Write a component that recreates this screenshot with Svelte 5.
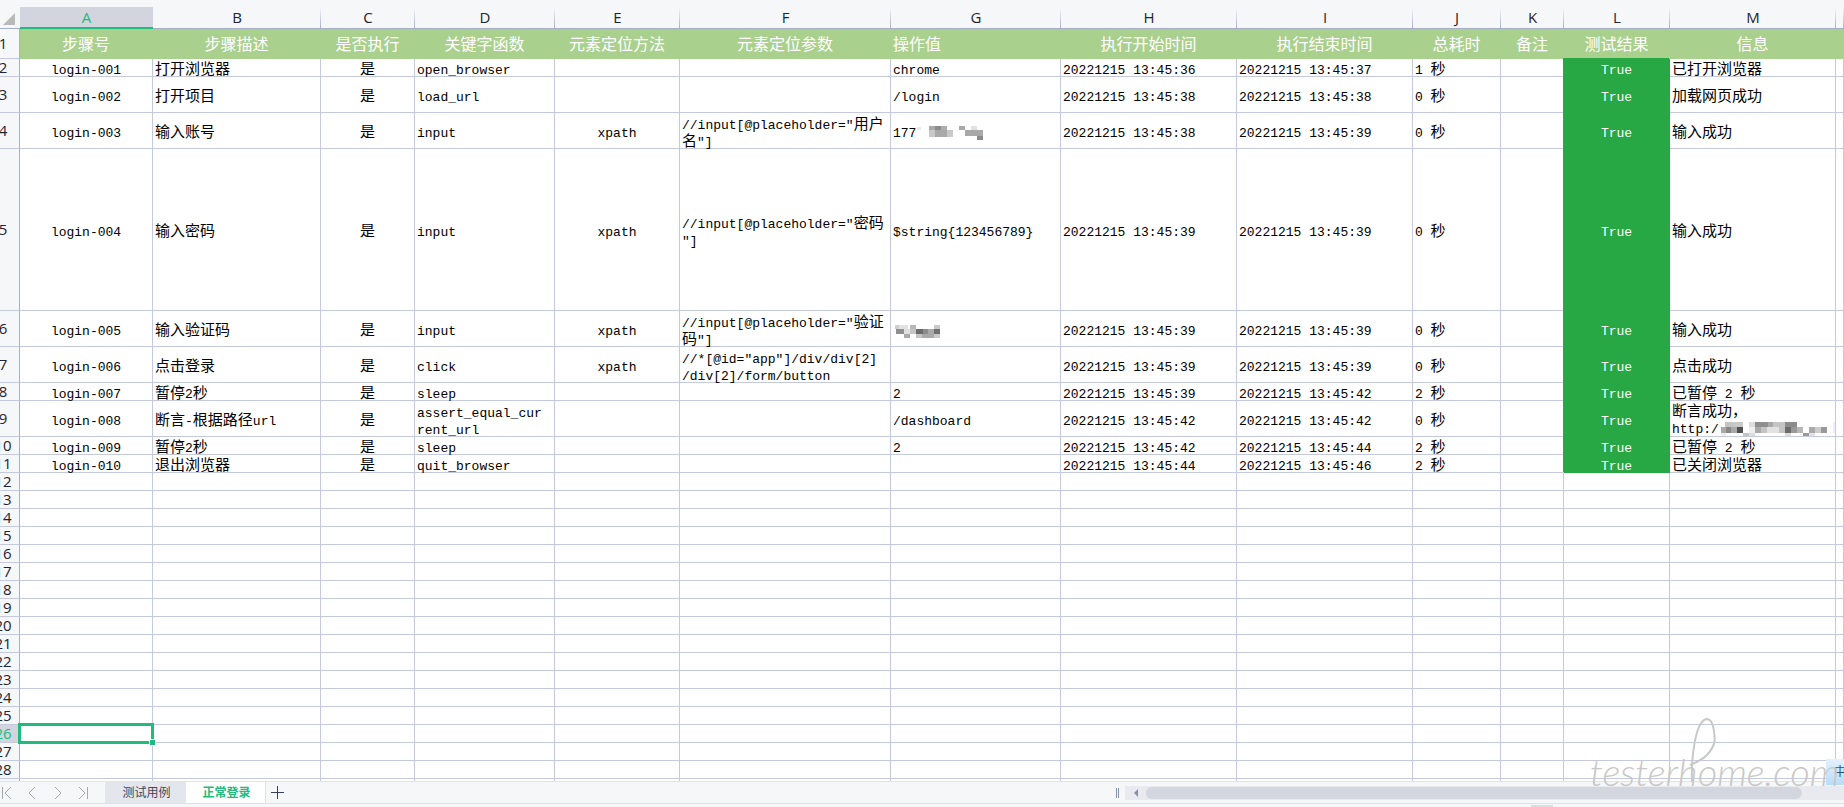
<script>
  const COLUMNS = [
    { id: 'A', width: 133, title: '步骤号', center: true },
    { id: 'B', width: 168, title: '步骤描述' },
    { id: 'C', width: 94, title: '是否执行', center: true },
    { id: 'D', width: 140, title: '关键字函数' },
    { id: 'E', width: 125, title: '元素定位方法', center: true },
    { id: 'F', width: 211, title: '元素定位参数' },
    { id: 'G', width: 170, title: '操作值', titleLeft: true },
    { id: 'H', width: 176, title: '执行开始时间' },
    { id: 'I', width: 176, title: '执行结束时间' },
    { id: 'J', width: 88, title: '总耗时' },
    { id: 'K', width: 63, title: '备注' },
    { id: 'L', width: 106, title: '测试结果', center: true },
    { id: 'M', width: 166, title: '信息' },
  ];

  const STEPS = [
    { height: 18, cells: ['login-001', '打开浏览器', '是', 'open_browser', '', '', 'chrome', '20221215 13:45:36', '20221215 13:45:37', '1 秒', '', 'True', '已打开浏览器'] },
    { height: 36, cells: ['login-002', '打开项目', '是', 'load_url', '', '', '/login', '20221215 13:45:38', '20221215 13:45:38', '0 秒', '', 'True', '加载网页成功'] },
    { height: 36, cells: ['login-003', '输入账号', '是', 'input', 'xpath', '//input[@placeholder="用户\n名"]', '177', '20221215 13:45:38', '20221215 13:45:39', '0 秒', '', 'True', '输入成功'] },
    { height: 162, cells: ['login-004', '输入密码', '是', 'input', 'xpath', '//input[@placeholder="密码\n"]', '$string{123456789}', '20221215 13:45:39', '20221215 13:45:39', '0 秒', '', 'True', '输入成功'] },
    { height: 36, cells: ['login-005', '输入验证码', '是', 'input', 'xpath', '//input[@placeholder="验证\n码"]', '', '20221215 13:45:39', '20221215 13:45:39', '0 秒', '', 'True', '输入成功'] },
    { height: 36, cells: ['login-006', '点击登录', '是', 'click', 'xpath', '//*[@id="app"]/div/div[2]\n/div[2]/form/button', '', '20221215 13:45:39', '20221215 13:45:39', '0 秒', '', 'True', '点击成功'] },
    { height: 18, cells: ['login-007', '暂停2秒', '是', 'sleep', '', '', '2', '20221215 13:45:39', '20221215 13:45:42', '2 秒', '', 'True', '已暂停 2 秒'] },
    { height: 36, cells: ['login-008', '断言-根据路径url', '是', 'assert_equal_cur\nrent_url', '', '', '/dashboard', '20221215 13:45:42', '20221215 13:45:42', '0 秒', '', 'True', '断言成功，\nhttp:/'] },
    { height: 18, cells: ['login-009', '暂停2秒', '是', 'sleep', '', '', '2', '20221215 13:45:42', '20221215 13:45:44', '2 秒', '', 'True', '已暂停 2 秒'] },
    { height: 18, cells: ['login-010', '退出浏览器', '是', 'quit_browser', '', '', '', '20221215 13:45:44', '20221215 13:45:46', '2 秒', '', 'True', '已关闭浏览器'] },
  ];

  // Pixelated blocks over private values: [x, y, w, h, fill], keyed by cell
  const MASKS = {
    G4: { width: 68, height: 14, tiles: [
      [1, 1, 4, 3, '#e9e9e9'], [13, 0, 6, 4, '#a9a9a9'], [19, 0, 6, 4, '#8b8b8b'], [25, 0, 6, 4, '#adadad'],
      [13, 4, 6, 7, '#c8c8c8'], [19, 4, 12, 7, '#a9a9a9'], [31, 4, 6, 7, '#c9c9c9'],
      [43, 0, 6, 4, '#a9a9a9'], [55, 0, 6, 4, '#e2e2e2'], [49, 4, 18, 6, '#a9a9a9'], [61, 10, 6, 4, '#8b8b8b'],
    ] },
    G6: { width: 48, height: 13, tiles: [
      [2, 0, 4, 4, '#d0d0d0'], [6, 0, 9, 4, '#e2e2e2'], [17, 0, 6, 4, '#b8b8b8'], [41, 0, 6, 4, '#c9c9c9'],
      [3, 4, 8, 5, '#8f8f8f'], [11, 4, 6, 5, '#e0e0e0'], [17, 4, 6, 5, '#c5c5c5'], [23, 4, 7, 5, '#6b6b6b'],
      [30, 4, 5, 5, '#8b8b8b'], [35, 4, 6, 5, '#a9a9a9'], [41, 4, 6, 5, '#6f6f6f'],
      [11, 9, 6, 4, '#a9a9a9'], [23, 9, 6, 4, '#c5c5c5'], [29, 9, 12, 4, '#a9a9a9'], [41, 9, 6, 4, '#c9c9c9'],
    ] },
    M9: { width: 116, height: 14, tiles: [
      [6, 0, 8, 5, '#c4c4c4'], [14, 0, 10, 5, '#c9c9c9'], [30, 0, 6, 5, '#ddd'], [36, 0, 13, 5, '#8f8f8f'],
      [49, 0, 5, 5, '#a9a9a9'], [54, 0, 12, 5, '#c4c4c4'], [66, 0, 12, 5, '#8b8b8b'],
      [2, 5, 5, 6, '#a9a9a9'], [7, 5, 5, 6, '#888'], [12, 5, 6, 6, '#a9a9a9'], [18, 5, 6, 6, '#4f4f4f'],
      [30, 5, 6, 6, '#eee'], [36, 5, 6, 6, '#a9a9a9'], [42, 5, 6, 6, '#c4c4c4'], [48, 5, 12, 6, '#e2e2e2'],
      [60, 5, 6, 6, '#c4c4c4'], [66, 5, 6, 6, '#6b6b6b'], [72, 5, 6, 6, '#999'], [78, 5, 6, 6, '#b8b8b8'],
      [90, 5, 6, 6, '#a9a9a9'], [96, 5, 6, 6, '#ccc'], [102, 5, 6, 6, '#999'], [2, 11, 5, 3, '#eee'],
      [24, 11, 6, 3, '#c4c4c4'], [30, 11, 6, 3, '#ddd'], [66, 11, 6, 3, '#ddd'], [84, 11, 6, 3, '#999'],
      [90, 11, 6, 3, '#e2e2e2'], [114, 0, 2, 11, '#eef'],
    ] },
  };

  const TABS = ['测试用例', '正常登录'];

  let activeTab = $state('正常登录');
  let selected = $state({ col: 'A', row: 26 });

  const emptyRows = Array.from({ length: 18 }, (_, i) => i + 12);

  // Latin runs use a narrower face than the Chinese ones
  function runs(text) {
    return text.match(/[\u3000-\u9fff\uff0c]+|[^\u3000-\u9fff\uff0c]+/g) || [];
  }

  function isLatin(run) {
    return run.charCodeAt(0) < 0x3000;
  }

  function isSelected(col, row) {
    return selected.col === col && selected.row === row;
  }
</script>

<div class="workbook">
  <div class="sheet">
    <table>
      <colgroup>
        <col class="col-index" />
        {#each COLUMNS as col}
          <col style="width: {col.width}px" />
        {/each}
        <col />
      </colgroup>
      <thead>
        <tr class="letters">
          <th class="corner"><svg width="12" height="12" viewBox="0 0 12 12"><path d="M12 0V12H0Z" fill="#b9b9b9" /></svg></th>
          {#each COLUMNS as col}
            <th scope="col" class:current={selected.col === col.id}><span>{col.id}</span></th>
          {/each}
          <th><span></span></th>
        </tr>
      </thead>
      <tbody>
        <tr class="titles">
          <th scope="row" class="index">1</th>
          {#each COLUMNS as col}
            <td class:left={col.titleLeft}>{col.title}</td>
          {/each}
          <td></td>
        </tr>
        {#each STEPS as step, i}
          <tr style="height: {step.height}px">
            <th scope="row" class="index">{i + 2}</th>
            {#each COLUMNS as col, c}
              {@const mask = MASKS[col.id + (i + 2)]}
              <td class:center={col.center} class:pass={col.id === 'L'} onclick={() => (selected = { col: col.id, row: i + 2 })} class:selected={isSelected(col.id, i + 2)}>{#each runs(step.cells[c]) as run}<span class:latin={isLatin(run)}>{run}</span>{/each}{#if mask}<svg class="mask" width={mask.width} height={mask.height}>{#each mask.tiles as [x, y, w, h, fill]}<rect {x} {y} width={w} height={h} {fill} />{/each}</svg>{/if}</td>
            {/each}
            <td></td>
          </tr>
        {/each}
        {#each emptyRows as row}
          <tr class="blank">
            <th scope="row" class="index" class:current={selected.row === row}>{row}</th>
            {#each COLUMNS as col}
              <td class:selected={isSelected(col.id, row)} onclick={() => (selected = { col: col.id, row })}></td>
            {/each}
            <td></td>
          </tr>
        {/each}
      </tbody>
    </table>
  </div>

  <div class="bottom-bar">
    <div class="tab-area">
      <div class="nav">
        <button aria-label="第一个工作表"><svg width="12" height="14" viewBox="0 0 12 14"><path d="M2.5 1V13M11 1L5 7L11 13" /></svg></button>
        <button aria-label="上一个工作表"><svg width="12" height="14" viewBox="0 0 12 14"><path d="M9 1L3 7L9 13" /></svg></button>
        <button aria-label="下一个工作表"><svg width="12" height="14" viewBox="0 0 12 14"><path d="M3 1L9 7L3 13" /></svg></button>
        <button aria-label="最后一个工作表"><svg width="12" height="14" viewBox="0 0 12 14"><path d="M1 1L7 7L1 13M9.5 1V13" /></svg></button>
      </div>
      {#each TABS as tab}
        <button class="tab" class:active={activeTab === tab} onclick={() => (activeTab = tab)}>{tab}</button>
      {/each}
      <button class="add" aria-label="新建工作表"><svg width="13" height="13" viewBox="0 0 13 13"><path d="M6.5 0V13M0 6.5H13" /></svg></button>
    </div>
    <div class="scroll-area">
      <span class="splitter"></span>
      <div class="track">
        <button aria-label="向左滚动"><svg width="4" height="8" viewBox="0 0 4 8"><path d="M4 0V8L0 4Z" fill="#8490ab" /></svg></button>
        <div class="thumb"></div>
      </div>
    </div>
  </div>
  <div class="status-bar"><span></span></div>

  <div class="ime">中</div>
  <div class="watermark">
    <svg width="30" height="68" viewBox="0 0 30 68"><path d="M3 65C2 43 6 3 18 2C26 2 26 24 25 27C20 39 13 43 1 48" /></svg>
    testerhome.com
  </div>
</div>

<style>
  :global(body) { margin: 0; }

  .workbook {
    position: relative; display: flex; flex-direction: column;
    height: 100vh; overflow: hidden;
    background: #f6f7f9; color: #000;
    font-family: "Open Sans", "Noto Sans CJK SC", sans-serif;
  }

  .sheet { flex: 1; min-height: 0; overflow: hidden; background: #fff; }

  /* the row index column is partly scrolled out on the left */
  table {
    width: calc(100% + 13px); margin-left: -13px;
    table-layout: fixed; border-collapse: separate; border-spacing: 0;
  }
  .col-index { width: 33px; }

  th, td { box-sizing: border-box; padding: 0; font-weight: 400; }

  .letters { height: 29px; }
  .letters th {
    padding-top: 7px; vertical-align: top;
    background: #f6f7f9; border-bottom: 1px solid #a7b0cb;
    font-size: 15px; line-height: 20px; color: #1f2430;
  }
  .letters span {
    display: block; height: 21px;
    background: linear-gradient(#f6f7f9, #a7b0cb) right / 1px 100% no-repeat;
  }
  .letters .current { color: #21bb7e; border-bottom: 2px solid #21bb7e; }
  .letters .current span { height: 20px; background: #d2d5dd; }
  .letters .corner { padding: 13px 5px 0 0; text-align: right; line-height: 12px; }
  .corner svg { display: inline-block; vertical-align: top; }

  .index {
    background: #f6f7f9; color: #1f2430;
    border-right: 1px solid #a7b0cb; border-bottom: 1px solid #c4c9dd;
    font-size: 15px; line-height: 17px; text-align: center;
  }
  .index.current { background: #d2d5dd; color: #21bb7e; }

  td {
    padding: 0 2px;
    border-right: 1px solid #c4c9dd; border-bottom: 1px solid #c4c9dd;
    font-family: "Noto Sans CJK SC", sans-serif;
    font-size: 15px; line-height: 17px; white-space: pre;
  }
  .center { text-align: center; }
  .latin { font-family: "Liberation Mono", monospace; font-size: 13px; line-height: 0; }
  .mask { vertical-align: -3px; }

  .titles { height: 30px; }
  .titles td {
    background: #aad08e; border-color: #aad08e;
    color: #fff; font-size: 16px; text-align: center;
  }
  .titles .left { text-align: left; }

  .pass { background: #28a745; border-color: #28a745; color: #fff; box-shadow: -1px -1px 0 #28a745; }
  .blank { height: 18px; }

  .selected { position: relative; }
  .selected::before {
    content: ""; position: absolute; inset: -2px;
    border: 3px solid #21bb7e;
  }
  .selected::after {
    content: ""; position: absolute; right: -4px; bottom: -4px;
    width: 5px; height: 5px;
    background: #21bb7e; border: 1px solid #fff;
  }

  button { padding: 0; border: 0; background: none; font: inherit; cursor: pointer; }

  .bottom-bar {
    display: flex; height: 21px;
    border-top: 1px solid #e1e3e9; border-bottom: 1px solid #dfe1e7;
  }
  .tab-area { display: flex; flex: 1; }
  .nav { display: flex; width: 105px; }
  .nav button { width: 26px; height: 21px; text-align: left; }
  .nav svg { display: block; fill: none; stroke: #a3a8b3; }
  .tab { width: 81px; padding-left: 2px; font-size: 12px; line-height: 20px; color: #3f4657; background: #e4e6ed; }
  .tab.active { width: 79px; color: #21bb7e; background: #fff; font-weight: 700; }
  .add { padding: 0 5px; border-left: 1px solid #dfe1e7; }
  .add svg { display: block; fill: none; stroke: #38425a; }

  .scroll-area { display: flex; width: 728px; align-items: center; gap: 6px; }
  .splitter { width: 1px; height: 10px; border: solid #8490ab; border-width: 0 1px; }
  .track { display: flex; flex: 1; align-items: center; height: 14px; background: #e9eaf0; }
  .track button { width: 21px; height: 14px; }
  .track svg { display: block; margin: 0 auto; }
  .thumb { flex: 1; height: 12px; margin-right: 42px; border-radius: 6px; background: #d3d6df; }

  .status-bar { height: 3px; }
  .status-bar span { display: block; width: 22px; height: 2px; margin: 1px 0 0 83%; background: #d5dfe4; }

  .ime {
    position: absolute; right: 0; bottom: 22px;
    width: 18px; height: 26px; padding-left: 8px; box-sizing: border-box; overflow: hidden;
    background: linear-gradient(#e4f1fd, #b9dbf9);
    font-size: 12px; line-height: 26px; color: #1f5674;
  }
  .watermark {
    position: absolute; right: 0; bottom: 16px; width: 254px;
    font-family: Lato, sans-serif; font-size: 38px; font-weight: 300; font-style: italic;
    line-height: 40px; color: #c8c8c8; white-space: nowrap; pointer-events: none;
  }
  .watermark svg {
    position: absolute; left: 99px; bottom: 6px;
    fill: none; stroke: #c8c8c8; stroke-width: 2;
  }
</style>
